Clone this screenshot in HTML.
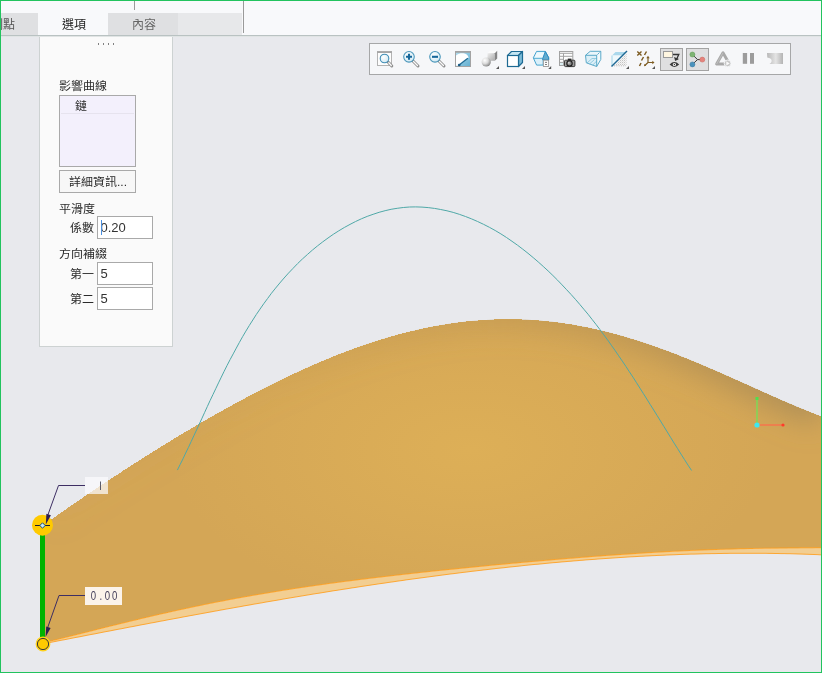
<!DOCTYPE html>
<html lang="zh-TW"><head><meta charset="utf-8">
<style>
html,body{margin:0;padding:0;}
body{width:822px;height:673px;position:relative;overflow:hidden;background:#e8e9ed;font-family:"Liberation Sans",sans-serif;}
.abs{position:absolute;}
#top{left:0;top:0;width:822px;height:35px;background:#f8f9fb;}
#topline{left:0;top:35px;width:822px;height:1px;background:#b9c2c2;}
.tab{position:absolute;top:13px;height:22px;font-size:12px;line-height:24px;text-align:center;}
.tt{position:absolute;left:0;top:0;width:100%;transform:translateZ(0);white-space:nowrap;}
#panel{left:39px;top:37px;width:132px;height:309px;background:#fafafa;border:1px solid #cdd2d2;border-top:none;}
.lbl{position:absolute;font-size:12px;color:#2a2a2a;font-weight:300;white-space:nowrap;line-height:14px;transform:translateZ(0) scaleY(0.92);transform-origin:0 85%;}
.inp{position:absolute;background:#fff;border:1px solid #a9a9a9;box-sizing:border-box;}
.num{font-size:13px;line-height:15px;transform:translateZ(0);color:#333;}
#border{left:0;top:0;width:822px;height:673px;box-sizing:border-box;border:1px solid #22c35e;pointer-events:none;}
#tb{left:369px;top:43px;width:422px;height:32px;box-sizing:border-box;border:1px solid #a6a7a8;background:#f6f7f9;}
</style></head>
<body>
<div id="top" class="abs"></div>
<div class="tab" style="left:1px;width:37px;background:#dfe0e2;overflow:hidden;"><span class="tt" style="left:-10px;width:auto;color:#555;">制點</span></div>
<div class="tab" style="left:38px;width:70px;background:#f8f9fb;"><span class="tt" style="left:1px;color:#1e1e1e;">選項</span></div>
<div class="tab" style="left:108px;width:70px;background:#dfe0e2;"><span class="tt" style="left:1px;color:#656565;">內容</span></div>
<div class="tab" style="left:178px;width:64px;background:#e7e8ea;"></div>
<div class="abs" style="left:134px;top:0;width:1px;height:10px;background:#9a9a9a;"></div>
<div class="abs" style="left:243px;top:0;width:1px;height:33px;background:#9a9a9a;"></div>
<div id="topline" class="abs"></div>
<div class="abs" style="left:0;top:36px;width:822px;height:1px;background:#e0e4e4;"></div>

<div id="panel" class="abs"></div>
<div class="abs" style="left:97.5px;top:43.3px;width:18px;height:1.4px;background-image:linear-gradient(90deg,#6a6a6a 1.3px,transparent 1.3px);background-size:5px 2px;opacity:0.85;"></div>
<div class="lbl" style="left:59px;top:79px;">影響曲線</div>
<div class="abs" style="left:59px;top:95px;width:77px;height:72px;box-sizing:border-box;border:1px solid #a9a9a9;background:#f3f0fc;"></div>
<div class="abs" style="left:61px;top:113px;width:73px;height:1px;background:#e6e3ee;"></div>
<div class="lbl" style="left:75px;top:99px;">鏈</div>
<div class="abs" style="left:59px;top:170px;width:77px;height:23px;box-sizing:border-box;border:1px solid #a9a9a9;background:#f7f7f7;"></div>
<div class="lbl" style="left:69px;top:175px;">詳細資訊...</div>
<div class="lbl" style="left:59px;top:202px;">平滑度</div>
<div class="lbl" style="left:70px;top:221px;">係數</div>
<div class="inp" style="left:97px;top:216px;width:56px;height:23px;"></div>
<div class="lbl num" style="left:100.5px;top:220px;">0.20</div>
<div class="abs" style="left:101px;top:220px;width:1px;height:15px;background:#4a8fe0;"></div>
<div class="lbl" style="left:59px;top:247px;">方向補綴</div>
<div class="lbl" style="left:70px;top:267px;">第一</div>
<div class="inp" style="left:97px;top:262px;width:56px;height:23px;"></div>
<div class="lbl num" style="left:100.5px;top:266px;">5</div>
<div class="lbl" style="left:70px;top:292px;">第二</div>
<div class="inp" style="left:97px;top:287px;width:56px;height:23px;"></div>
<div class="lbl num" style="left:100.5px;top:291px;">5</div>

<svg class="abs" style="left:369px;top:43px" width="422" height="32" viewBox="369 43 422 32">
 <defs>
  <radialGradient id="lens" cx="0.4" cy="0.35" r="0.7"><stop offset="0" stop-color="#ffffff"/><stop offset="1" stop-color="#cfe8f3"/></radialGradient>
  <radialGradient id="sphg" cx="0.35" cy="0.32" r="0.8"><stop offset="0" stop-color="#ffffff"/><stop offset="0.45" stop-color="#dcdcdc"/><stop offset="1" stop-color="#707070"/></radialGradient>
  <linearGradient id="cubeg" x1="0" y1="0" x2="1" y2="1"><stop offset="0" stop-color="#eeeeee"/><stop offset="1" stop-color="#a9a9a9"/></linearGradient>
  <linearGradient id="refg" x1="0" y1="0" x2="1" y2="1"><stop offset="0" stop-color="#b4def0"/><stop offset="1" stop-color="#62afd0"/></linearGradient>
  <pattern id="dots" width="2" height="2" patternUnits="userSpaceOnUse"><rect width="2" height="2" fill="#f4f4f4"/><rect x="0" y="0" width="1" height="1" fill="#c4c4c4"/><rect x="1" y="1" width="1" height="1" fill="#e2e2e2"/></pattern>
  <linearGradient id="g16" x1="0" y1="0" x2="1" y2="0"><stop offset="0" stop-color="#b8b8b8"/><stop offset="0.55" stop-color="#e4e4e4"/><stop offset="1" stop-color="#b4b4b4"/></linearGradient>
 </defs>
 <rect x="369.5" y="43.5" width="421" height="31" fill="#f6f7f9" stroke="#a6a7a8"/>
 <!-- 1 zoom window -->
 <rect x="377.5" y="51.5" width="14" height="14" fill="#fdfdfd" stroke="#b3b3b3"/>
 <line x1="377" y1="52.2" x2="392" y2="52.2" stroke="#a6a6a6" stroke-width="1.6"/>
 <line x1="388.3" y1="62.3" x2="391.8" y2="66" stroke="#8e8e8e" stroke-width="3" stroke-linecap="round"/>
 <line x1="388.8" y1="62.8" x2="391.3" y2="65.5" stroke="#fafafa" stroke-width="1.3" stroke-linecap="round"/>
 <circle cx="384.5" cy="58.5" r="4.3" fill="url(#lens)" stroke="#3f8db5" stroke-width="1.1"/>
 <!-- 2 zoom in -->
 <line x1="413" y1="61" x2="418" y2="66" stroke="#8e8e8e" stroke-width="3" stroke-linecap="round"/>
 <line x1="413.5" y1="61.5" x2="417.5" y2="65.5" stroke="#fafafa" stroke-width="1.3" stroke-linecap="round"/>
 <circle cx="409" cy="56.8" r="5.3" fill="url(#lens)" stroke="#4a96ba" stroke-width="1.05"/>
 <path d="M406,56.8 H412 M409,53.8 V59.8" stroke="#16679a" stroke-width="2.1"/>
 <!-- 3 zoom out -->
 <line x1="439" y1="61" x2="444" y2="66" stroke="#8e8e8e" stroke-width="3" stroke-linecap="round"/>
 <line x1="439.5" y1="61.5" x2="443.5" y2="65.5" stroke="#fafafa" stroke-width="1.3" stroke-linecap="round"/>
 <circle cx="435" cy="56.8" r="5.3" fill="url(#lens)" stroke="#4a96ba" stroke-width="1.05"/>
 <path d="M432,56.8 H438" stroke="#16679a" stroke-width="2.1"/>
 <!-- 4 refit -->
 <rect x="455.5" y="51.5" width="15" height="15" fill="url(#refg)" stroke="#a3a3a3"/>
 <line x1="455" y1="52" x2="471" y2="52" stroke="#a3a3a3" stroke-width="1.6"/>
 <path d="M456,55.5 C458,53.5 461,53 463.5,53.2 C466,53.5 467.8,55 468.6,57.4 L458.5,65.8 H456 Z" fill="#ffffff"/>
 <line x1="458.8" y1="65.3" x2="467.8" y2="58.2" stroke="#1e6b94" stroke-width="1.3"/>
 <circle cx="459.2" cy="65" r="1.3" fill="#1a5a84"/>
 <!-- 5 shading -->
 <path d="M487.5,53.2 L490,50.8 H497.2 L494.8,53.2 Z" fill="#fbfbfb"/>
 <path d="M487.5,53.2 H494.8 V60.8 H487.5 Z" fill="url(#cubeg)"/>
 <path d="M494.8,53.2 L497.2,50.8 V58.6 L494.8,60.8 Z" fill="#858585"/>
 <circle cx="486.2" cy="62" r="4.6" fill="url(#sphg)"/>
 <path d="M499,66 V69 H496 Z" fill="#555"/>
 <!-- 6 cube -->
 <path d="M507.5,55.5 L511.5,51.5 H522.5 L518.5,55.5 Z" fill="#c5e6f2" stroke="#1d6a93" stroke-width="1.2" stroke-linejoin="round"/>
 <path d="M518.5,55.5 L522.5,51.5 V62.5 L518.5,66.5 Z" fill="#7cbcd8" stroke="#1d6a93" stroke-width="1.2" stroke-linejoin="round"/>
 <rect x="507.5" y="55.5" width="11" height="11" fill="#fff" stroke="#1d6a93" stroke-width="1.2"/>
 <path d="M525,66 V69 H522 Z" fill="#555"/>
 <!-- 7 hex -->
 <path d="M533.3,57.8 L536.6,51.4 H545.3 L548.7,57.6 V60 H543.2 V65.1 H536.6 Z" fill="#daf0fa" stroke="#3d9fcc" stroke-width="0.95" stroke-linejoin="round"/>
 <path d="M536.8,52.5 H544.5 L542.3,58 H534.5 Z" fill="#eef9fd"/>
 <path d="M533.6,58.3 H542.6" stroke="#4aa6d0" stroke-width="0.95"/>
 <path d="M542.6,58.8 L545.3,51.6 L548.6,57.6 V59.8 H542.6 Z" fill="#62acd0" stroke="#2185bd" stroke-width="0.9" stroke-linejoin="round"/>
 <rect x="543.4" y="60.2" width="5.2" height="6.3" fill="#fcfcfc" stroke="#9a9a9a" stroke-width="0.9"/>
 <path d="M545,62.4 H547 M545,64.5 H547" stroke="#6f6f6f" stroke-width="0.9"/>
 <path d="M551.2,66 V69 H548.2 Z" fill="#555"/>
 <!-- 8 table camera -->
 <rect x="559.5" y="51.5" width="13.3" height="14" fill="#fdfdfd" stroke="#a2a2a2"/>
 <path d="M559.5,53.3 H572.8 M559.5,56.3 H572.8 M559.5,59.3 H564 M559.5,62.4 H564 M563.5,53.3 V65.5" stroke="#a2a2a2" stroke-width="1"/>
 <rect x="560.2" y="63.2" width="2.8" height="1.6" fill="#cfeaf0"/>
 <rect x="564.5" y="60.2" width="10.4" height="6.4" rx="1" fill="#9c9c9c" stroke="#2a2a2a" stroke-width="0.9"/>
 <rect x="567.8" y="58.6" width="3.6" height="1.8" fill="#2a2a2a"/>
 <circle cx="569.5" cy="63.4" r="2.7" fill="#8a8a8a" stroke="#1e1e1e" stroke-width="1.1"/>
 <circle cx="568.9" cy="62.8" r="0.9" fill="#d8d8d8"/>
 <!-- 9 tunnel box -->
 <path d="M585.5,55.3 L590.2,51.3 H600.8 L596.7,55.3 Z" fill="#eaf6fb"/>
 <path d="M596.7,55.3 L600.8,51.3 V59.4 L596.7,66.5 Z" fill="#f2fafd"/>
 <path d="M585.5,55.3 H596.7 V66.5 L586.3,62.8 Z" fill="#dceff7"/>
 <path d="M587,63 L592,58.5 H596.7 M589.5,64 L594.5,59.5 M592.5,65.3 L596.7,61" stroke="#8ac6de" stroke-width="0.9" fill="none"/>
 <path d="M585.5,55.3 L590.2,51.3 H600.8 V59.4 L596.7,66.5 L586.3,62.8 Z M585.5,55.3 H596.7 V66.5" fill="none" stroke="#5aa9c9" stroke-width="1" stroke-linejoin="round"/>
 <path d="M596.7,55.3 L600.8,51.3" stroke="#4a9cc0" stroke-width="1" stroke-dasharray="1.2,0.8"/>
 <!-- 10 section -->
 <path d="M612,55.5 L615.5,52 H626.5 L623,55.5 Z" fill="#aad8ec"/>
 <path d="M612,55.5 V66 L623,55.5 Z" fill="#eef8fc"/>
 <path d="M612,55.5 V66" stroke="#9fd3e8" stroke-width="1"/>
 <path d="M626.5,53 L614,65.5 H626.5 Z" fill="url(#dots)"/>
 <path d="M614,65.8 H626" stroke="#b8b8b8" stroke-width="1" stroke-dasharray="1,1.3"/>
 <line x1="611.5" y1="66.5" x2="627" y2="51" stroke="#1f6994" stroke-width="1.5"/>
 <path d="M629,66 V69 H626 Z" fill="#555"/>
 <!-- 11 datum -->
 <path d="M637.3,51.5 L641.5,55.5 M641.5,51.5 L637.3,55.5" stroke="#7d5c22" stroke-width="1.4"/>
 <path d="M644.5,55 L646.5,51.5 M641.5,60.5 L643.5,57 M639.5,66 L641,63" stroke="#7d5c22" stroke-width="1.5"/>
 <path d="M648,63 V57.5 M648,62.5 H653 M648,62.5 L644.8,65.5" stroke="#7d5c22" stroke-width="1.2"/>
 <path d="M646.3,58.3 L648,55.8 L649.7,58.3 Z M652.3,60.8 L654.5,62.5 L652.3,64.2 Z M644,64 L644.2,66.2 L646.2,65.8 Z" fill="#7d5c22"/>
 <path d="M655,66 V69 H652 Z" fill="#555"/>
 <!-- 12 active -->
 <rect x="660.5" y="48.5" width="22" height="22" fill="#dfdfe0" stroke="#a3a3a3"/>
 <rect x="663.5" y="51.5" width="9" height="6" fill="#fff6e0" stroke="#9a9a9a"/>
 <path d="M673,54.5 H678.8 L676.5,59.5" stroke="#353535" stroke-width="1.3" fill="none"/>
 <path d="M674,57 L675.2,61 L679,59 Z" fill="#353535"/>
 <path d="M669.6,64.5 Q674.4,59.6 679.2,64.5 Q674.4,69.4 669.6,64.5 Z" fill="#3a3a3a"/>
 <circle cx="674.4" cy="64.5" r="1.6" fill="#fff"/>
 <circle cx="674.4" cy="64.5" r="0.7" fill="#3a3a3a"/>
 <!-- 13 active -->
 <rect x="686.5" y="48.5" width="22" height="22" fill="#dfdfe0" stroke="#a3a3a3"/>
 <path d="M692.4,54.5 L697.5,59.6 H702.3 M697.5,59.6 L692.4,64.4" stroke="#3a3a3a" stroke-width="1" fill="none"/>
 <circle cx="692.4" cy="54.5" r="2.5" fill="#7fb474" stroke="#5a9a50" stroke-width="0.5"/>
 <circle cx="702.3" cy="59.6" r="2.5" fill="#e5837d" stroke="#c86a60" stroke-width="0.5"/>
 <circle cx="692.4" cy="64.4" r="2.5" fill="#4a92bc" stroke="#3a7aa0" stroke-width="0.5"/>
 <!-- 14 triangle -->
 <path d="M723,52.8 L716.6,64 H729.4 Z" fill="none" stroke="#a9a9a9" stroke-width="2.9" stroke-linejoin="round"/>
 <path d="M723,52.8 L716.6,64" fill="none" stroke="#c4c4c4" stroke-width="0.8"/>
 <circle cx="727.6" cy="63.4" r="3.4" fill="#c6c6c6" stroke="#f6f7f9" stroke-width="0.9"/>
 <path d="M726.3,61.3 L729.7,63.4 L726.3,65.5 Z" fill="#fafafa"/>
 <!-- 15 pause -->
 <rect x="742.8" y="53" width="4.3" height="10.8" fill="#9c9c9c"/>
 <rect x="750" y="53" width="4" height="10.8" fill="#9c9c9c"/>
 <!-- 16 -->
 <path d="M767,53 H783 V64 H769.5 C772.8,62.3 772.6,58.2 767.3,57.6 Z" fill="url(#g16)"/>
</svg>

<svg class="abs" style="left:0;top:0" width="822" height="673" viewBox="0 0 822 673">
  <defs>
    <radialGradient id="hl" cx="470" cy="450" r="300" gradientTransform="translate(470 450) scale(1 0.55) translate(-470 -450)" gradientUnits="userSpaceOnUse">
      <stop offset="0" stop-color="#ddaf57" stop-opacity="1"/>
      <stop offset="1" stop-color="#ddaf57" stop-opacity="0"/>
    </radialGradient>
    <linearGradient id="edg" x1="42" y1="0" x2="822" y2="0" gradientUnits="userSpaceOnUse">
      <stop offset="0" stop-color="#a8844e" stop-opacity="0.03"/>
      <stop offset="0.3" stop-color="#a8844e" stop-opacity="0.08"/>
      <stop offset="0.55" stop-color="#a8844e" stop-opacity="0.26"/>
      <stop offset="0.8" stop-color="#a48552" stop-opacity="0.5"/>
      <stop offset="1" stop-color="#a08658" stop-opacity="0.72"/>
    </linearGradient>
    <clipPath id="sclip"><path d="M42.5,525.9 45.5,523.8 48.5,521.6 51.5,519.5 54.5,517.3 57.5,515.2 60.5,513.1 63.5,511.0 66.5,508.9 69.5,506.8 72.5,504.7 75.5,502.6 78.5,500.6 81.5,498.5 84.5,496.5 87.5,494.4 90.5,492.4 93.5,490.4 96.5,488.4 99.5,486.3 102.5,484.3 105.5,482.4 108.5,480.4 111.5,478.4 114.5,476.4 117.5,474.5 120.5,472.5 123.5,470.5 126.5,468.6 129.5,466.7 132.5,464.7 135.5,462.8 138.5,460.9 141.5,459.0 144.5,457.1 147.5,455.2 150.5,453.3 153.5,451.5 156.5,449.6 159.5,447.7 162.5,445.9 165.5,444.0 168.5,442.2 171.5,440.4 174.5,438.5 177.5,436.7 180.5,434.9 183.5,433.1 186.5,431.3 189.5,429.6 192.5,427.8 195.5,426.0 198.5,424.3 201.5,422.5 204.5,420.8 207.5,419.1 210.5,417.3 213.5,415.6 216.5,413.9 219.5,412.2 222.5,410.6 225.5,408.9 228.5,407.2 231.5,405.6 234.5,403.9 237.5,402.3 240.5,400.7 243.5,399.1 246.5,397.5 249.5,395.9 252.5,394.3 255.5,392.7 258.5,391.2 261.5,389.6 264.5,388.1 267.5,386.6 270.5,385.1 273.5,383.6 276.5,382.1 279.5,380.6 282.5,379.2 285.5,377.7 288.5,376.3 291.5,374.9 294.5,373.5 297.5,372.1 300.5,370.7 303.5,369.3 306.5,368.0 309.5,366.6 312.5,365.3 315.5,364.0 318.5,362.7 321.5,361.5 324.5,360.2 327.5,359.0 330.5,357.7 333.5,356.5 336.5,355.3 339.5,354.1 342.5,353.0 345.5,351.8 348.5,350.7 351.5,349.6 354.5,348.5 357.5,347.4 360.5,346.3 363.5,345.3 366.5,344.3 369.5,343.3 372.5,342.3 375.5,341.3 378.5,340.4 381.5,339.4 384.5,338.5 387.5,337.6 390.5,336.7 393.5,335.9 396.5,335.1 399.5,334.2 402.5,333.4 405.5,332.7 408.5,331.9 411.5,331.2 414.5,330.5 417.5,329.8 420.5,329.1 423.5,328.4 426.5,327.8 429.5,327.2 432.5,326.6 435.5,326.0 438.5,325.5 441.5,325.0 444.5,324.5 447.5,324.0 450.5,323.5 453.5,323.1 456.5,322.7 459.5,322.3 462.5,322.0 465.5,321.6 468.5,321.3 471.5,321.0 474.5,320.7 477.5,320.5 480.5,320.2 483.5,320.0 486.5,319.9 489.5,319.7 492.5,319.6 495.5,319.4 498.5,319.4 501.5,319.3 504.5,319.3 507.5,319.2 510.5,319.2 513.5,319.3 516.5,319.3 519.5,319.4 522.5,319.5 525.5,319.6 528.5,319.8 531.5,320.0 534.5,320.2 537.5,320.4 540.5,320.6 543.5,320.9 546.5,321.2 549.5,321.5 552.5,321.8 555.5,322.2 558.5,322.6 561.5,323.0 564.5,323.4 567.5,323.9 570.5,324.3 573.5,324.8 576.5,325.4 579.5,325.9 582.5,326.5 585.5,327.1 588.5,327.7 591.5,328.3 594.5,329.0 597.5,329.7 600.5,330.4 603.5,331.1 606.5,331.8 609.5,332.6 612.5,333.4 615.5,334.2 618.5,335.0 621.5,335.8 624.5,336.7 627.5,337.6 630.5,338.5 633.5,339.4 636.5,340.3 639.5,341.3 642.5,342.3 645.5,343.3 648.5,344.3 651.5,345.3 654.5,346.4 657.5,347.4 660.5,348.5 663.5,349.6 666.5,350.7 669.5,351.8 672.5,353.0 675.5,354.1 678.5,355.3 681.5,356.5 684.5,357.7 687.5,358.9 690.5,360.1 693.5,361.4 696.5,362.6 699.5,363.9 702.5,365.1 705.5,366.4 708.5,367.7 711.5,369.0 714.5,370.3 717.5,371.6 720.5,372.9 723.5,374.2 726.5,375.5 729.5,376.9 732.5,378.2 735.5,379.5 738.5,380.9 741.5,382.2 744.5,383.6 747.5,384.9 750.5,386.3 753.5,387.6 756.5,389.0 759.5,390.3 762.5,391.7 765.5,393.0 768.5,394.4 771.5,395.7 774.5,397.0 777.5,398.3 780.5,399.7 783.5,401.0 786.5,402.3 789.5,403.6 792.5,404.8 795.5,406.1 798.5,407.4 801.5,408.6 804.5,409.8 807.5,411.1 810.5,412.3 813.5,413.4 816.5,414.6 819.5,415.8 822.5,416.9 823.0,417.1 L823.0,547.7 822.0,547.7 819.0,547.7 816.0,547.7 813.0,547.8 810.0,547.8 807.0,547.8 804.0,547.8 801.0,547.8 798.0,547.9 795.0,547.9 792.0,547.9 789.0,547.9 786.0,548.0 783.0,548.0 780.0,548.0 777.0,548.1 774.0,548.1 771.0,548.2 768.0,548.2 765.0,548.2 762.0,548.3 759.0,548.4 756.0,548.4 753.0,548.5 750.0,548.5 747.0,548.6 744.0,548.7 741.0,548.7 738.0,548.8 735.0,548.9 732.0,549.0 729.0,549.1 726.0,549.2 723.0,549.3 720.0,549.4 717.0,549.5 714.0,549.6 711.0,549.7 708.0,549.8 705.0,549.9 702.0,550.0 699.0,550.1 696.0,550.3 693.0,550.4 690.0,550.5 687.0,550.7 684.0,550.8 681.0,550.9 678.0,551.1 675.0,551.2 672.0,551.4 669.0,551.6 666.0,551.7 663.0,551.9 660.0,552.0 657.0,552.2 654.0,552.4 651.0,552.6 648.0,552.7 645.0,552.9 642.0,553.1 639.0,553.3 636.0,553.5 633.0,553.7 630.0,553.9 627.0,554.1 624.0,554.3 621.0,554.5 618.0,554.7 615.0,554.9 612.0,555.1 609.0,555.3 606.0,555.5 603.0,555.7 600.0,556.0 597.0,556.2 594.0,556.4 591.0,556.6 588.0,556.9 585.0,557.1 582.0,557.3 579.0,557.6 576.0,557.8 573.0,558.1 570.0,558.3 567.0,558.5 564.0,558.8 561.0,559.0 558.0,559.3 555.0,559.5 552.0,559.8 549.0,560.1 546.0,560.3 543.0,560.6 540.0,560.8 537.0,561.1 534.0,561.4 531.0,561.6 528.0,561.9 525.0,562.2 522.0,562.4 519.0,562.7 516.0,563.0 513.0,563.2 510.0,563.5 507.0,563.8 504.0,564.1 501.0,564.4 498.0,564.6 495.0,564.9 492.0,565.2 489.0,565.5 486.0,565.8 483.0,566.1 480.0,566.4 477.0,566.7 474.0,567.0 471.0,567.3 468.0,567.6 465.0,567.9 462.0,568.2 459.0,568.5 456.0,568.8 453.0,569.1 450.0,569.4 447.0,569.7 444.0,570.0 441.0,570.3 438.0,570.6 435.0,570.9 432.0,571.2 429.0,571.6 426.0,571.9 423.0,572.2 420.0,572.5 417.0,572.9 414.0,573.2 411.0,573.5 408.0,573.9 405.0,574.2 402.0,574.5 399.0,574.9 396.0,575.2 393.0,575.6 390.0,575.9 387.0,576.3 384.0,576.6 381.0,577.0 378.0,577.3 375.0,577.7 372.0,578.0 369.0,578.4 366.0,578.8 363.0,579.1 360.0,579.5 357.0,579.9 354.0,580.3 351.0,580.7 348.0,581.0 345.0,581.4 342.0,581.8 339.0,582.2 336.0,582.6 333.0,583.0 330.0,583.4 327.0,583.8 324.0,584.3 321.0,584.7 318.0,585.1 315.0,585.5 312.0,586.0 309.0,586.4 306.0,586.8 303.0,587.3 300.0,587.7 297.0,588.2 294.0,588.6 291.0,589.1 288.0,589.6 285.0,590.0 282.0,590.5 279.0,591.0 276.0,591.5 273.0,592.0 270.0,592.5 267.0,593.0 264.0,593.5 261.0,594.0 258.0,594.5 255.0,595.0 252.0,595.5 249.0,596.1 246.0,596.6 243.0,597.1 240.0,597.7 237.0,598.2 234.0,598.8 231.0,599.3 228.0,599.9 225.0,600.5 222.0,601.1 219.0,601.6 216.0,602.2 213.0,602.8 210.0,603.4 207.0,604.0 204.0,604.6 201.0,605.3 198.0,605.9 195.0,606.5 192.0,607.1 189.0,607.8 186.0,608.4 183.0,609.1 180.0,609.7 177.0,610.4 174.0,611.0 171.0,611.7 168.0,612.4 165.0,613.1 162.0,613.7 159.0,614.4 156.0,615.1 153.0,615.8 150.0,616.5 147.0,617.2 144.0,617.9 141.0,618.6 138.0,619.4 135.0,620.1 132.0,620.8 129.0,621.5 126.0,622.3 123.0,623.0 120.0,623.7 117.0,624.5 114.0,625.2 111.0,625.9 108.0,626.7 105.0,627.4 102.0,628.2 99.0,628.9 96.0,629.7 93.0,630.5 90.0,631.2 87.0,632.0 84.0,632.7 81.0,633.5 78.0,634.2 75.0,635.0 72.0,635.7 69.0,636.5 66.0,637.2 63.0,638.0 60.0,638.7 57.0,639.5 54.0,640.2 51.0,640.9 48.0,641.6 45.0,642.4 Z" shape-rendering="crispEdges"/></clipPath>
    <filter id="blur" x="-20%" y="-50%" width="140%" height="200%"><feGaussianBlur stdDeviation="14"/></filter>
  </defs>
  <path d="M42.5,525.9 45.5,523.8 48.5,521.6 51.5,519.5 54.5,517.3 57.5,515.2 60.5,513.1 63.5,511.0 66.5,508.9 69.5,506.8 72.5,504.7 75.5,502.6 78.5,500.6 81.5,498.5 84.5,496.5 87.5,494.4 90.5,492.4 93.5,490.4 96.5,488.4 99.5,486.3 102.5,484.3 105.5,482.4 108.5,480.4 111.5,478.4 114.5,476.4 117.5,474.5 120.5,472.5 123.5,470.5 126.5,468.6 129.5,466.7 132.5,464.7 135.5,462.8 138.5,460.9 141.5,459.0 144.5,457.1 147.5,455.2 150.5,453.3 153.5,451.5 156.5,449.6 159.5,447.7 162.5,445.9 165.5,444.0 168.5,442.2 171.5,440.4 174.5,438.5 177.5,436.7 180.5,434.9 183.5,433.1 186.5,431.3 189.5,429.6 192.5,427.8 195.5,426.0 198.5,424.3 201.5,422.5 204.5,420.8 207.5,419.1 210.5,417.3 213.5,415.6 216.5,413.9 219.5,412.2 222.5,410.6 225.5,408.9 228.5,407.2 231.5,405.6 234.5,403.9 237.5,402.3 240.5,400.7 243.5,399.1 246.5,397.5 249.5,395.9 252.5,394.3 255.5,392.7 258.5,391.2 261.5,389.6 264.5,388.1 267.5,386.6 270.5,385.1 273.5,383.6 276.5,382.1 279.5,380.6 282.5,379.2 285.5,377.7 288.5,376.3 291.5,374.9 294.5,373.5 297.5,372.1 300.5,370.7 303.5,369.3 306.5,368.0 309.5,366.6 312.5,365.3 315.5,364.0 318.5,362.7 321.5,361.5 324.5,360.2 327.5,359.0 330.5,357.7 333.5,356.5 336.5,355.3 339.5,354.1 342.5,353.0 345.5,351.8 348.5,350.7 351.5,349.6 354.5,348.5 357.5,347.4 360.5,346.3 363.5,345.3 366.5,344.3 369.5,343.3 372.5,342.3 375.5,341.3 378.5,340.4 381.5,339.4 384.5,338.5 387.5,337.6 390.5,336.7 393.5,335.9 396.5,335.1 399.5,334.2 402.5,333.4 405.5,332.7 408.5,331.9 411.5,331.2 414.5,330.5 417.5,329.8 420.5,329.1 423.5,328.4 426.5,327.8 429.5,327.2 432.5,326.6 435.5,326.0 438.5,325.5 441.5,325.0 444.5,324.5 447.5,324.0 450.5,323.5 453.5,323.1 456.5,322.7 459.5,322.3 462.5,322.0 465.5,321.6 468.5,321.3 471.5,321.0 474.5,320.7 477.5,320.5 480.5,320.2 483.5,320.0 486.5,319.9 489.5,319.7 492.5,319.6 495.5,319.4 498.5,319.4 501.5,319.3 504.5,319.3 507.5,319.2 510.5,319.2 513.5,319.3 516.5,319.3 519.5,319.4 522.5,319.5 525.5,319.6 528.5,319.8 531.5,320.0 534.5,320.2 537.5,320.4 540.5,320.6 543.5,320.9 546.5,321.2 549.5,321.5 552.5,321.8 555.5,322.2 558.5,322.6 561.5,323.0 564.5,323.4 567.5,323.9 570.5,324.3 573.5,324.8 576.5,325.4 579.5,325.9 582.5,326.5 585.5,327.1 588.5,327.7 591.5,328.3 594.5,329.0 597.5,329.7 600.5,330.4 603.5,331.1 606.5,331.8 609.5,332.6 612.5,333.4 615.5,334.2 618.5,335.0 621.5,335.8 624.5,336.7 627.5,337.6 630.5,338.5 633.5,339.4 636.5,340.3 639.5,341.3 642.5,342.3 645.5,343.3 648.5,344.3 651.5,345.3 654.5,346.4 657.5,347.4 660.5,348.5 663.5,349.6 666.5,350.7 669.5,351.8 672.5,353.0 675.5,354.1 678.5,355.3 681.5,356.5 684.5,357.7 687.5,358.9 690.5,360.1 693.5,361.4 696.5,362.6 699.5,363.9 702.5,365.1 705.5,366.4 708.5,367.7 711.5,369.0 714.5,370.3 717.5,371.6 720.5,372.9 723.5,374.2 726.5,375.5 729.5,376.9 732.5,378.2 735.5,379.5 738.5,380.9 741.5,382.2 744.5,383.6 747.5,384.9 750.5,386.3 753.5,387.6 756.5,389.0 759.5,390.3 762.5,391.7 765.5,393.0 768.5,394.4 771.5,395.7 774.5,397.0 777.5,398.3 780.5,399.7 783.5,401.0 786.5,402.3 789.5,403.6 792.5,404.8 795.5,406.1 798.5,407.4 801.5,408.6 804.5,409.8 807.5,411.1 810.5,412.3 813.5,413.4 816.5,414.6 819.5,415.8 822.5,416.9 823.0,417.1 L823.0,547.7 822.0,547.7 819.0,547.7 816.0,547.7 813.0,547.8 810.0,547.8 807.0,547.8 804.0,547.8 801.0,547.8 798.0,547.9 795.0,547.9 792.0,547.9 789.0,547.9 786.0,548.0 783.0,548.0 780.0,548.0 777.0,548.1 774.0,548.1 771.0,548.2 768.0,548.2 765.0,548.2 762.0,548.3 759.0,548.4 756.0,548.4 753.0,548.5 750.0,548.5 747.0,548.6 744.0,548.7 741.0,548.7 738.0,548.8 735.0,548.9 732.0,549.0 729.0,549.1 726.0,549.2 723.0,549.3 720.0,549.4 717.0,549.5 714.0,549.6 711.0,549.7 708.0,549.8 705.0,549.9 702.0,550.0 699.0,550.1 696.0,550.3 693.0,550.4 690.0,550.5 687.0,550.7 684.0,550.8 681.0,550.9 678.0,551.1 675.0,551.2 672.0,551.4 669.0,551.6 666.0,551.7 663.0,551.9 660.0,552.0 657.0,552.2 654.0,552.4 651.0,552.6 648.0,552.7 645.0,552.9 642.0,553.1 639.0,553.3 636.0,553.5 633.0,553.7 630.0,553.9 627.0,554.1 624.0,554.3 621.0,554.5 618.0,554.7 615.0,554.9 612.0,555.1 609.0,555.3 606.0,555.5 603.0,555.7 600.0,556.0 597.0,556.2 594.0,556.4 591.0,556.6 588.0,556.9 585.0,557.1 582.0,557.3 579.0,557.6 576.0,557.8 573.0,558.1 570.0,558.3 567.0,558.5 564.0,558.8 561.0,559.0 558.0,559.3 555.0,559.5 552.0,559.8 549.0,560.1 546.0,560.3 543.0,560.6 540.0,560.8 537.0,561.1 534.0,561.4 531.0,561.6 528.0,561.9 525.0,562.2 522.0,562.4 519.0,562.7 516.0,563.0 513.0,563.2 510.0,563.5 507.0,563.8 504.0,564.1 501.0,564.4 498.0,564.6 495.0,564.9 492.0,565.2 489.0,565.5 486.0,565.8 483.0,566.1 480.0,566.4 477.0,566.7 474.0,567.0 471.0,567.3 468.0,567.6 465.0,567.9 462.0,568.2 459.0,568.5 456.0,568.8 453.0,569.1 450.0,569.4 447.0,569.7 444.0,570.0 441.0,570.3 438.0,570.6 435.0,570.9 432.0,571.2 429.0,571.6 426.0,571.9 423.0,572.2 420.0,572.5 417.0,572.9 414.0,573.2 411.0,573.5 408.0,573.9 405.0,574.2 402.0,574.5 399.0,574.9 396.0,575.2 393.0,575.6 390.0,575.9 387.0,576.3 384.0,576.6 381.0,577.0 378.0,577.3 375.0,577.7 372.0,578.0 369.0,578.4 366.0,578.8 363.0,579.1 360.0,579.5 357.0,579.9 354.0,580.3 351.0,580.7 348.0,581.0 345.0,581.4 342.0,581.8 339.0,582.2 336.0,582.6 333.0,583.0 330.0,583.4 327.0,583.8 324.0,584.3 321.0,584.7 318.0,585.1 315.0,585.5 312.0,586.0 309.0,586.4 306.0,586.8 303.0,587.3 300.0,587.7 297.0,588.2 294.0,588.6 291.0,589.1 288.0,589.6 285.0,590.0 282.0,590.5 279.0,591.0 276.0,591.5 273.0,592.0 270.0,592.5 267.0,593.0 264.0,593.5 261.0,594.0 258.0,594.5 255.0,595.0 252.0,595.5 249.0,596.1 246.0,596.6 243.0,597.1 240.0,597.7 237.0,598.2 234.0,598.8 231.0,599.3 228.0,599.9 225.0,600.5 222.0,601.1 219.0,601.6 216.0,602.2 213.0,602.8 210.0,603.4 207.0,604.0 204.0,604.6 201.0,605.3 198.0,605.9 195.0,606.5 192.0,607.1 189.0,607.8 186.0,608.4 183.0,609.1 180.0,609.7 177.0,610.4 174.0,611.0 171.0,611.7 168.0,612.4 165.0,613.1 162.0,613.7 159.0,614.4 156.0,615.1 153.0,615.8 150.0,616.5 147.0,617.2 144.0,617.9 141.0,618.6 138.0,619.4 135.0,620.1 132.0,620.8 129.0,621.5 126.0,622.3 123.0,623.0 120.0,623.7 117.0,624.5 114.0,625.2 111.0,625.9 108.0,626.7 105.0,627.4 102.0,628.2 99.0,628.9 96.0,629.7 93.0,630.5 90.0,631.2 87.0,632.0 84.0,632.7 81.0,633.5 78.0,634.2 75.0,635.0 72.0,635.7 69.0,636.5 66.0,637.2 63.0,638.0 60.0,638.7 57.0,639.5 54.0,640.2 51.0,640.9 48.0,641.6 45.0,642.4 Z" fill="#d4a656" shape-rendering="crispEdges"/>
  <path d="M42.5,525.9 45.5,523.8 48.5,521.6 51.5,519.5 54.5,517.3 57.5,515.2 60.5,513.1 63.5,511.0 66.5,508.9 69.5,506.8 72.5,504.7 75.5,502.6 78.5,500.6 81.5,498.5 84.5,496.5 87.5,494.4 90.5,492.4 93.5,490.4 96.5,488.4 99.5,486.3 102.5,484.3 105.5,482.4 108.5,480.4 111.5,478.4 114.5,476.4 117.5,474.5 120.5,472.5 123.5,470.5 126.5,468.6 129.5,466.7 132.5,464.7 135.5,462.8 138.5,460.9 141.5,459.0 144.5,457.1 147.5,455.2 150.5,453.3 153.5,451.5 156.5,449.6 159.5,447.7 162.5,445.9 165.5,444.0 168.5,442.2 171.5,440.4 174.5,438.5 177.5,436.7 180.5,434.9 183.5,433.1 186.5,431.3 189.5,429.6 192.5,427.8 195.5,426.0 198.5,424.3 201.5,422.5 204.5,420.8 207.5,419.1 210.5,417.3 213.5,415.6 216.5,413.9 219.5,412.2 222.5,410.6 225.5,408.9 228.5,407.2 231.5,405.6 234.5,403.9 237.5,402.3 240.5,400.7 243.5,399.1 246.5,397.5 249.5,395.9 252.5,394.3 255.5,392.7 258.5,391.2 261.5,389.6 264.5,388.1 267.5,386.6 270.5,385.1 273.5,383.6 276.5,382.1 279.5,380.6 282.5,379.2 285.5,377.7 288.5,376.3 291.5,374.9 294.5,373.5 297.5,372.1 300.5,370.7 303.5,369.3 306.5,368.0 309.5,366.6 312.5,365.3 315.5,364.0 318.5,362.7 321.5,361.5 324.5,360.2 327.5,359.0 330.5,357.7 333.5,356.5 336.5,355.3 339.5,354.1 342.5,353.0 345.5,351.8 348.5,350.7 351.5,349.6 354.5,348.5 357.5,347.4 360.5,346.3 363.5,345.3 366.5,344.3 369.5,343.3 372.5,342.3 375.5,341.3 378.5,340.4 381.5,339.4 384.5,338.5 387.5,337.6 390.5,336.7 393.5,335.9 396.5,335.1 399.5,334.2 402.5,333.4 405.5,332.7 408.5,331.9 411.5,331.2 414.5,330.5 417.5,329.8 420.5,329.1 423.5,328.4 426.5,327.8 429.5,327.2 432.5,326.6 435.5,326.0 438.5,325.5 441.5,325.0 444.5,324.5 447.5,324.0 450.5,323.5 453.5,323.1 456.5,322.7 459.5,322.3 462.5,322.0 465.5,321.6 468.5,321.3 471.5,321.0 474.5,320.7 477.5,320.5 480.5,320.2 483.5,320.0 486.5,319.9 489.5,319.7 492.5,319.6 495.5,319.4 498.5,319.4 501.5,319.3 504.5,319.3 507.5,319.2 510.5,319.2 513.5,319.3 516.5,319.3 519.5,319.4 522.5,319.5 525.5,319.6 528.5,319.8 531.5,320.0 534.5,320.2 537.5,320.4 540.5,320.6 543.5,320.9 546.5,321.2 549.5,321.5 552.5,321.8 555.5,322.2 558.5,322.6 561.5,323.0 564.5,323.4 567.5,323.9 570.5,324.3 573.5,324.8 576.5,325.4 579.5,325.9 582.5,326.5 585.5,327.1 588.5,327.7 591.5,328.3 594.5,329.0 597.5,329.7 600.5,330.4 603.5,331.1 606.5,331.8 609.5,332.6 612.5,333.4 615.5,334.2 618.5,335.0 621.5,335.8 624.5,336.7 627.5,337.6 630.5,338.5 633.5,339.4 636.5,340.3 639.5,341.3 642.5,342.3 645.5,343.3 648.5,344.3 651.5,345.3 654.5,346.4 657.5,347.4 660.5,348.5 663.5,349.6 666.5,350.7 669.5,351.8 672.5,353.0 675.5,354.1 678.5,355.3 681.5,356.5 684.5,357.7 687.5,358.9 690.5,360.1 693.5,361.4 696.5,362.6 699.5,363.9 702.5,365.1 705.5,366.4 708.5,367.7 711.5,369.0 714.5,370.3 717.5,371.6 720.5,372.9 723.5,374.2 726.5,375.5 729.5,376.9 732.5,378.2 735.5,379.5 738.5,380.9 741.5,382.2 744.5,383.6 747.5,384.9 750.5,386.3 753.5,387.6 756.5,389.0 759.5,390.3 762.5,391.7 765.5,393.0 768.5,394.4 771.5,395.7 774.5,397.0 777.5,398.3 780.5,399.7 783.5,401.0 786.5,402.3 789.5,403.6 792.5,404.8 795.5,406.1 798.5,407.4 801.5,408.6 804.5,409.8 807.5,411.1 810.5,412.3 813.5,413.4 816.5,414.6 819.5,415.8 822.5,416.9 823.0,417.1 L823.0,547.7 822.0,547.7 819.0,547.7 816.0,547.7 813.0,547.8 810.0,547.8 807.0,547.8 804.0,547.8 801.0,547.8 798.0,547.9 795.0,547.9 792.0,547.9 789.0,547.9 786.0,548.0 783.0,548.0 780.0,548.0 777.0,548.1 774.0,548.1 771.0,548.2 768.0,548.2 765.0,548.2 762.0,548.3 759.0,548.4 756.0,548.4 753.0,548.5 750.0,548.5 747.0,548.6 744.0,548.7 741.0,548.7 738.0,548.8 735.0,548.9 732.0,549.0 729.0,549.1 726.0,549.2 723.0,549.3 720.0,549.4 717.0,549.5 714.0,549.6 711.0,549.7 708.0,549.8 705.0,549.9 702.0,550.0 699.0,550.1 696.0,550.3 693.0,550.4 690.0,550.5 687.0,550.7 684.0,550.8 681.0,550.9 678.0,551.1 675.0,551.2 672.0,551.4 669.0,551.6 666.0,551.7 663.0,551.9 660.0,552.0 657.0,552.2 654.0,552.4 651.0,552.6 648.0,552.7 645.0,552.9 642.0,553.1 639.0,553.3 636.0,553.5 633.0,553.7 630.0,553.9 627.0,554.1 624.0,554.3 621.0,554.5 618.0,554.7 615.0,554.9 612.0,555.1 609.0,555.3 606.0,555.5 603.0,555.7 600.0,556.0 597.0,556.2 594.0,556.4 591.0,556.6 588.0,556.9 585.0,557.1 582.0,557.3 579.0,557.6 576.0,557.8 573.0,558.1 570.0,558.3 567.0,558.5 564.0,558.8 561.0,559.0 558.0,559.3 555.0,559.5 552.0,559.8 549.0,560.1 546.0,560.3 543.0,560.6 540.0,560.8 537.0,561.1 534.0,561.4 531.0,561.6 528.0,561.9 525.0,562.2 522.0,562.4 519.0,562.7 516.0,563.0 513.0,563.2 510.0,563.5 507.0,563.8 504.0,564.1 501.0,564.4 498.0,564.6 495.0,564.9 492.0,565.2 489.0,565.5 486.0,565.8 483.0,566.1 480.0,566.4 477.0,566.7 474.0,567.0 471.0,567.3 468.0,567.6 465.0,567.9 462.0,568.2 459.0,568.5 456.0,568.8 453.0,569.1 450.0,569.4 447.0,569.7 444.0,570.0 441.0,570.3 438.0,570.6 435.0,570.9 432.0,571.2 429.0,571.6 426.0,571.9 423.0,572.2 420.0,572.5 417.0,572.9 414.0,573.2 411.0,573.5 408.0,573.9 405.0,574.2 402.0,574.5 399.0,574.9 396.0,575.2 393.0,575.6 390.0,575.9 387.0,576.3 384.0,576.6 381.0,577.0 378.0,577.3 375.0,577.7 372.0,578.0 369.0,578.4 366.0,578.8 363.0,579.1 360.0,579.5 357.0,579.9 354.0,580.3 351.0,580.7 348.0,581.0 345.0,581.4 342.0,581.8 339.0,582.2 336.0,582.6 333.0,583.0 330.0,583.4 327.0,583.8 324.0,584.3 321.0,584.7 318.0,585.1 315.0,585.5 312.0,586.0 309.0,586.4 306.0,586.8 303.0,587.3 300.0,587.7 297.0,588.2 294.0,588.6 291.0,589.1 288.0,589.6 285.0,590.0 282.0,590.5 279.0,591.0 276.0,591.5 273.0,592.0 270.0,592.5 267.0,593.0 264.0,593.5 261.0,594.0 258.0,594.5 255.0,595.0 252.0,595.5 249.0,596.1 246.0,596.6 243.0,597.1 240.0,597.7 237.0,598.2 234.0,598.8 231.0,599.3 228.0,599.9 225.0,600.5 222.0,601.1 219.0,601.6 216.0,602.2 213.0,602.8 210.0,603.4 207.0,604.0 204.0,604.6 201.0,605.3 198.0,605.9 195.0,606.5 192.0,607.1 189.0,607.8 186.0,608.4 183.0,609.1 180.0,609.7 177.0,610.4 174.0,611.0 171.0,611.7 168.0,612.4 165.0,613.1 162.0,613.7 159.0,614.4 156.0,615.1 153.0,615.8 150.0,616.5 147.0,617.2 144.0,617.9 141.0,618.6 138.0,619.4 135.0,620.1 132.0,620.8 129.0,621.5 126.0,622.3 123.0,623.0 120.0,623.7 117.0,624.5 114.0,625.2 111.0,625.9 108.0,626.7 105.0,627.4 102.0,628.2 99.0,628.9 96.0,629.7 93.0,630.5 90.0,631.2 87.0,632.0 84.0,632.7 81.0,633.5 78.0,634.2 75.0,635.0 72.0,635.7 69.0,636.5 66.0,637.2 63.0,638.0 60.0,638.7 57.0,639.5 54.0,640.2 51.0,640.9 48.0,641.6 45.0,642.4 Z" fill="url(#hl)"/>
  <g clip-path="url(#sclip)">
    <path d="M42.5,525.9 45.5,523.8 48.5,521.6 51.5,519.5 54.5,517.3 57.5,515.2 60.5,513.1 63.5,511.0 66.5,508.9 69.5,506.8 72.5,504.7 75.5,502.6 78.5,500.6 81.5,498.5 84.5,496.5 87.5,494.4 90.5,492.4 93.5,490.4 96.5,488.4 99.5,486.3 102.5,484.3 105.5,482.4 108.5,480.4 111.5,478.4 114.5,476.4 117.5,474.5 120.5,472.5 123.5,470.5 126.5,468.6 129.5,466.7 132.5,464.7 135.5,462.8 138.5,460.9 141.5,459.0 144.5,457.1 147.5,455.2 150.5,453.3 153.5,451.5 156.5,449.6 159.5,447.7 162.5,445.9 165.5,444.0 168.5,442.2 171.5,440.4 174.5,438.5 177.5,436.7 180.5,434.9 183.5,433.1 186.5,431.3 189.5,429.6 192.5,427.8 195.5,426.0 198.5,424.3 201.5,422.5 204.5,420.8 207.5,419.1 210.5,417.3 213.5,415.6 216.5,413.9 219.5,412.2 222.5,410.6 225.5,408.9 228.5,407.2 231.5,405.6 234.5,403.9 237.5,402.3 240.5,400.7 243.5,399.1 246.5,397.5 249.5,395.9 252.5,394.3 255.5,392.7 258.5,391.2 261.5,389.6 264.5,388.1 267.5,386.6 270.5,385.1 273.5,383.6 276.5,382.1 279.5,380.6 282.5,379.2 285.5,377.7 288.5,376.3 291.5,374.9 294.5,373.5 297.5,372.1 300.5,370.7 303.5,369.3 306.5,368.0 309.5,366.6 312.5,365.3 315.5,364.0 318.5,362.7 321.5,361.5 324.5,360.2 327.5,359.0 330.5,357.7 333.5,356.5 336.5,355.3 339.5,354.1 342.5,353.0 345.5,351.8 348.5,350.7 351.5,349.6 354.5,348.5 357.5,347.4 360.5,346.3 363.5,345.3 366.5,344.3 369.5,343.3 372.5,342.3 375.5,341.3 378.5,340.4 381.5,339.4 384.5,338.5 387.5,337.6 390.5,336.7 393.5,335.9 396.5,335.1 399.5,334.2 402.5,333.4 405.5,332.7 408.5,331.9 411.5,331.2 414.5,330.5 417.5,329.8 420.5,329.1 423.5,328.4 426.5,327.8 429.5,327.2 432.5,326.6 435.5,326.0 438.5,325.5 441.5,325.0 444.5,324.5 447.5,324.0 450.5,323.5 453.5,323.1 456.5,322.7 459.5,322.3 462.5,322.0 465.5,321.6 468.5,321.3 471.5,321.0 474.5,320.7 477.5,320.5 480.5,320.2 483.5,320.0 486.5,319.9 489.5,319.7 492.5,319.6 495.5,319.4 498.5,319.4 501.5,319.3 504.5,319.3 507.5,319.2 510.5,319.2 513.5,319.3 516.5,319.3 519.5,319.4 522.5,319.5 525.5,319.6 528.5,319.8 531.5,320.0 534.5,320.2 537.5,320.4 540.5,320.6 543.5,320.9 546.5,321.2 549.5,321.5 552.5,321.8 555.5,322.2 558.5,322.6 561.5,323.0 564.5,323.4 567.5,323.9 570.5,324.3 573.5,324.8 576.5,325.4 579.5,325.9 582.5,326.5 585.5,327.1 588.5,327.7 591.5,328.3 594.5,329.0 597.5,329.7 600.5,330.4 603.5,331.1 606.5,331.8 609.5,332.6 612.5,333.4 615.5,334.2 618.5,335.0 621.5,335.8 624.5,336.7 627.5,337.6 630.5,338.5 633.5,339.4 636.5,340.3 639.5,341.3 642.5,342.3 645.5,343.3 648.5,344.3 651.5,345.3 654.5,346.4 657.5,347.4 660.5,348.5 663.5,349.6 666.5,350.7 669.5,351.8 672.5,353.0 675.5,354.1 678.5,355.3 681.5,356.5 684.5,357.7 687.5,358.9 690.5,360.1 693.5,361.4 696.5,362.6 699.5,363.9 702.5,365.1 705.5,366.4 708.5,367.7 711.5,369.0 714.5,370.3 717.5,371.6 720.5,372.9 723.5,374.2 726.5,375.5 729.5,376.9 732.5,378.2 735.5,379.5 738.5,380.9 741.5,382.2 744.5,383.6 747.5,384.9 750.5,386.3 753.5,387.6 756.5,389.0 759.5,390.3 762.5,391.7 765.5,393.0 768.5,394.4 771.5,395.7 774.5,397.0 777.5,398.3 780.5,399.7 783.5,401.0 786.5,402.3 789.5,403.6 792.5,404.8 795.5,406.1 798.5,407.4 801.5,408.6 804.5,409.8 807.5,411.1 810.5,412.3 813.5,413.4 816.5,414.6 819.5,415.8 822.5,416.9 823.0,417.1" transform="translate(0,-12)" fill="none" stroke="url(#edg)" stroke-width="44" filter="url(#blur)"/>
  </g>
  <path d="M45.0,642.4 48.0,641.6 51.0,640.9 54.0,640.2 57.0,639.5 60.0,638.7 63.0,638.0 66.0,637.2 69.0,636.5 72.0,635.7 75.0,635.0 78.0,634.2 81.0,633.5 84.0,632.7 87.0,632.0 90.0,631.2 93.0,630.5 96.0,629.7 99.0,628.9 102.0,628.2 105.0,627.4 108.0,626.7 111.0,625.9 114.0,625.2 117.0,624.5 120.0,623.7 123.0,623.0 126.0,622.3 129.0,621.5 132.0,620.8 135.0,620.1 138.0,619.4 141.0,618.6 144.0,617.9 147.0,617.2 150.0,616.5 153.0,615.8 156.0,615.1 159.0,614.4 162.0,613.7 165.0,613.1 168.0,612.4 171.0,611.7 174.0,611.0 177.0,610.4 180.0,609.7 183.0,609.1 186.0,608.4 189.0,607.8 192.0,607.1 195.0,606.5 198.0,605.9 201.0,605.3 204.0,604.6 207.0,604.0 210.0,603.4 213.0,602.8 216.0,602.2 219.0,601.6 222.0,601.1 225.0,600.5 228.0,599.9 231.0,599.3 234.0,598.8 237.0,598.2 240.0,597.7 243.0,597.1 246.0,596.6 249.0,596.1 252.0,595.5 255.0,595.0 258.0,594.5 261.0,594.0 264.0,593.5 267.0,593.0 270.0,592.5 273.0,592.0 276.0,591.5 279.0,591.0 282.0,590.5 285.0,590.0 288.0,589.6 291.0,589.1 294.0,588.6 297.0,588.2 300.0,587.7 303.0,587.3 306.0,586.8 309.0,586.4 312.0,586.0 315.0,585.5 318.0,585.1 321.0,584.7 324.0,584.3 327.0,583.8 330.0,583.4 333.0,583.0 336.0,582.6 339.0,582.2 342.0,581.8 345.0,581.4 348.0,581.0 351.0,580.7 354.0,580.3 357.0,579.9 360.0,579.5 363.0,579.1 366.0,578.8 369.0,578.4 372.0,578.0 375.0,577.7 378.0,577.3 381.0,577.0 384.0,576.6 387.0,576.3 390.0,575.9 393.0,575.6 396.0,575.2 399.0,574.9 402.0,574.5 405.0,574.2 408.0,573.9 411.0,573.5 414.0,573.2 417.0,572.9 420.0,572.5 423.0,572.2 426.0,571.9 429.0,571.6 432.0,571.2 435.0,570.9 438.0,570.6 441.0,570.3 444.0,570.0 447.0,569.7 450.0,569.4 453.0,569.1 456.0,568.8 459.0,568.5 462.0,568.2 465.0,567.9 468.0,567.6 471.0,567.3 474.0,567.0 477.0,566.7 480.0,566.4 483.0,566.1 486.0,565.8 489.0,565.5 492.0,565.2 495.0,564.9 498.0,564.6 501.0,564.4 504.0,564.1 507.0,563.8 510.0,563.5 513.0,563.2 516.0,563.0 519.0,562.7 522.0,562.4 525.0,562.2 528.0,561.9 531.0,561.6 534.0,561.4 537.0,561.1 540.0,560.8 543.0,560.6 546.0,560.3 549.0,560.1 552.0,559.8 555.0,559.5 558.0,559.3 561.0,559.0 564.0,558.8 567.0,558.5 570.0,558.3 573.0,558.1 576.0,557.8 579.0,557.6 582.0,557.3 585.0,557.1 588.0,556.9 591.0,556.6 594.0,556.4 597.0,556.2 600.0,556.0 603.0,555.7 606.0,555.5 609.0,555.3 612.0,555.1 615.0,554.9 618.0,554.7 621.0,554.5 624.0,554.3 627.0,554.1 630.0,553.9 633.0,553.7 636.0,553.5 639.0,553.3 642.0,553.1 645.0,552.9 648.0,552.7 651.0,552.6 654.0,552.4 657.0,552.2 660.0,552.0 663.0,551.9 666.0,551.7 669.0,551.6 672.0,551.4 675.0,551.2 678.0,551.1 681.0,550.9 684.0,550.8 687.0,550.7 690.0,550.5 693.0,550.4 696.0,550.3 699.0,550.1 702.0,550.0 705.0,549.9 708.0,549.8 711.0,549.7 714.0,549.6 717.0,549.5 720.0,549.4 723.0,549.3 726.0,549.2 729.0,549.1 732.0,549.0 735.0,548.9 738.0,548.8 741.0,548.7 744.0,548.7 747.0,548.6 750.0,548.5 753.0,548.5 756.0,548.4 759.0,548.4 762.0,548.3 765.0,548.2 768.0,548.2 771.0,548.2 774.0,548.1 777.0,548.1 780.0,548.0 783.0,548.0 786.0,548.0 789.0,547.9 792.0,547.9 795.0,547.9 798.0,547.9 801.0,547.8 804.0,547.8 807.0,547.8 810.0,547.8 813.0,547.8 816.0,547.7 819.0,547.7 822.0,547.7 823.0,547.7 L823.0,554.9 820.0,554.8 817.0,554.6 814.0,554.5 811.0,554.4 808.0,554.3 805.0,554.2 802.0,554.1 799.0,554.0 796.0,553.9 793.0,553.8 790.0,553.7 787.0,553.7 784.0,553.6 781.0,553.6 778.0,553.5 775.0,553.5 772.0,553.4 769.0,553.4 766.0,553.3 763.0,553.3 760.0,553.3 757.0,553.3 754.0,553.3 751.0,553.3 748.0,553.3 745.0,553.3 742.0,553.3 739.0,553.3 736.0,553.3 733.0,553.3 730.0,553.3 727.0,553.4 724.0,553.4 721.0,553.5 718.0,553.5 715.0,553.6 712.0,553.6 709.0,553.7 706.0,553.7 703.0,553.8 700.0,553.9 697.0,554.0 694.0,554.1 691.0,554.1 688.0,554.2 685.0,554.3 682.0,554.4 679.0,554.5 676.0,554.7 673.0,554.8 670.0,554.9 667.0,555.0 664.0,555.2 661.0,555.3 658.0,555.4 655.0,555.6 652.0,555.7 649.0,555.9 646.0,556.0 643.0,556.2 640.0,556.3 637.0,556.5 634.0,556.7 631.0,556.8 628.0,557.0 625.0,557.2 622.0,557.4 619.0,557.6 616.0,557.8 613.0,558.0 610.0,558.2 607.0,558.4 604.0,558.6 601.0,558.8 598.0,559.0 595.0,559.3 592.0,559.5 589.0,559.7 586.0,559.9 583.0,560.2 580.0,560.4 577.0,560.7 574.0,560.9 571.0,561.2 568.0,561.4 565.0,561.7 562.0,561.9 559.0,562.2 556.0,562.5 553.0,562.7 550.0,563.0 547.0,563.3 544.0,563.6 541.0,563.9 538.0,564.2 535.0,564.4 532.0,564.7 529.0,565.0 526.0,565.3 523.0,565.6 520.0,566.0 517.0,566.3 514.0,566.6 511.0,566.9 508.0,567.2 505.0,567.6 502.0,567.9 499.0,568.2 496.0,568.5 493.0,568.9 490.0,569.2 487.0,569.6 484.0,569.9 481.0,570.3 478.0,570.6 475.0,571.0 472.0,571.3 469.0,571.7 466.0,572.1 463.0,572.4 460.0,572.8 457.0,573.2 454.0,573.6 451.0,573.9 448.0,574.3 445.0,574.7 442.0,575.1 439.0,575.5 436.0,575.9 433.0,576.3 430.0,576.7 427.0,577.1 424.0,577.5 421.0,577.9 418.0,578.3 415.0,578.7 412.0,579.1 409.0,579.5 406.0,579.9 403.0,580.4 400.0,580.8 397.0,581.2 394.0,581.7 391.0,582.1 388.0,582.5 385.0,583.0 382.0,583.4 379.0,583.8 376.0,584.3 373.0,584.7 370.0,585.2 367.0,585.6 364.0,586.1 361.0,586.5 358.0,587.0 355.0,587.5 352.0,587.9 349.0,588.4 346.0,588.9 343.0,589.3 340.0,589.8 337.0,590.3 334.0,590.7 331.0,591.2 328.0,591.7 325.0,592.2 322.0,592.7 319.0,593.2 316.0,593.6 313.0,594.1 310.0,594.6 307.0,595.1 304.0,595.6 301.0,596.1 298.0,596.6 295.0,597.1 292.0,597.6 289.0,598.1 286.0,598.6 283.0,599.1 280.0,599.7 277.0,600.2 274.0,600.7 271.0,601.2 268.0,601.7 265.0,602.2 262.0,602.8 259.0,603.3 256.0,603.8 253.0,604.3 250.0,604.9 247.0,605.4 244.0,605.9 241.0,606.5 238.0,607.0 235.0,607.5 232.0,608.1 229.0,608.6 226.0,609.1 223.0,609.7 220.0,610.2 217.0,610.8 214.0,611.3 211.0,611.9 208.0,612.4 205.0,613.0 202.0,613.5 199.0,614.1 196.0,614.6 193.0,615.2 190.0,615.7 187.0,616.3 184.0,616.8 181.0,617.4 178.0,618.0 175.0,618.5 172.0,619.1 169.0,619.6 166.0,620.2 163.0,620.8 160.0,621.3 157.0,621.9 154.0,622.5 151.0,623.0 148.0,623.6 145.0,624.2 142.0,624.7 139.0,625.3 136.0,625.9 133.0,626.5 130.0,627.0 127.0,627.6 124.0,628.2 121.0,628.8 118.0,629.3 115.0,629.9 112.0,630.5 109.0,631.1 106.0,631.6 103.0,632.2 100.0,632.8 97.0,633.4 94.0,634.0 91.0,634.5 88.0,635.1 85.0,635.7 82.0,636.3 79.0,636.9 76.0,637.4 73.0,638.0 70.0,638.6 67.0,639.2 64.0,639.8 61.0,640.3 58.0,640.9 55.0,641.5 52.0,642.1 49.0,642.7 46.0,643.2 43.0,643.8 Z" fill="#f2ce92"/>
  <path d="M45.0,642.4 48.0,641.6 51.0,640.9 54.0,640.2 57.0,639.5 60.0,638.7 63.0,638.0 66.0,637.2 69.0,636.5 72.0,635.7 75.0,635.0 78.0,634.2 81.0,633.5 84.0,632.7 87.0,632.0 90.0,631.2 93.0,630.5 96.0,629.7 99.0,628.9 102.0,628.2 105.0,627.4 108.0,626.7 111.0,625.9 114.0,625.2 117.0,624.5 120.0,623.7 123.0,623.0 126.0,622.3 129.0,621.5 132.0,620.8 135.0,620.1 138.0,619.4 141.0,618.6 144.0,617.9 147.0,617.2 150.0,616.5 153.0,615.8 156.0,615.1 159.0,614.4 162.0,613.7 165.0,613.1 168.0,612.4 171.0,611.7 174.0,611.0 177.0,610.4 180.0,609.7 183.0,609.1 186.0,608.4 189.0,607.8 192.0,607.1 195.0,606.5 198.0,605.9 201.0,605.3 204.0,604.6 207.0,604.0 210.0,603.4 213.0,602.8 216.0,602.2 219.0,601.6 222.0,601.1 225.0,600.5 228.0,599.9 231.0,599.3 234.0,598.8 237.0,598.2 240.0,597.7 243.0,597.1 246.0,596.6 249.0,596.1 252.0,595.5 255.0,595.0 258.0,594.5 261.0,594.0 264.0,593.5 267.0,593.0 270.0,592.5 273.0,592.0 276.0,591.5 279.0,591.0 282.0,590.5 285.0,590.0 288.0,589.6 291.0,589.1 294.0,588.6 297.0,588.2 300.0,587.7 303.0,587.3 306.0,586.8 309.0,586.4 312.0,586.0 315.0,585.5 318.0,585.1 321.0,584.7 324.0,584.3 327.0,583.8 330.0,583.4 333.0,583.0 336.0,582.6 339.0,582.2 342.0,581.8 345.0,581.4 348.0,581.0 351.0,580.7 354.0,580.3 357.0,579.9 360.0,579.5 363.0,579.1 366.0,578.8 369.0,578.4 372.0,578.0 375.0,577.7 378.0,577.3 381.0,577.0 384.0,576.6 387.0,576.3 390.0,575.9 393.0,575.6 396.0,575.2 399.0,574.9 402.0,574.5 405.0,574.2 408.0,573.9 411.0,573.5 414.0,573.2 417.0,572.9 420.0,572.5 423.0,572.2 426.0,571.9 429.0,571.6 432.0,571.2 435.0,570.9 438.0,570.6 441.0,570.3 444.0,570.0 447.0,569.7 450.0,569.4 453.0,569.1 456.0,568.8 459.0,568.5 462.0,568.2 465.0,567.9 468.0,567.6 471.0,567.3 474.0,567.0 477.0,566.7 480.0,566.4 483.0,566.1 486.0,565.8 489.0,565.5 492.0,565.2 495.0,564.9 498.0,564.6 501.0,564.4 504.0,564.1 507.0,563.8 510.0,563.5 513.0,563.2 516.0,563.0 519.0,562.7 522.0,562.4 525.0,562.2 528.0,561.9 531.0,561.6 534.0,561.4 537.0,561.1 540.0,560.8 543.0,560.6 546.0,560.3 549.0,560.1 552.0,559.8 555.0,559.5 558.0,559.3 561.0,559.0 564.0,558.8 567.0,558.5 570.0,558.3 573.0,558.1 576.0,557.8 579.0,557.6 582.0,557.3 585.0,557.1 588.0,556.9 591.0,556.6 594.0,556.4 597.0,556.2 600.0,556.0 603.0,555.7 606.0,555.5 609.0,555.3 612.0,555.1 615.0,554.9 618.0,554.7 621.0,554.5 624.0,554.3 627.0,554.1 630.0,553.9 633.0,553.7 636.0,553.5 639.0,553.3 642.0,553.1 645.0,552.9 648.0,552.7 651.0,552.6 654.0,552.4 657.0,552.2 660.0,552.0 663.0,551.9 666.0,551.7 669.0,551.6 672.0,551.4 675.0,551.2 678.0,551.1 681.0,550.9 684.0,550.8 687.0,550.7 690.0,550.5 693.0,550.4 696.0,550.3 699.0,550.1 702.0,550.0 705.0,549.9 708.0,549.8 711.0,549.7 714.0,549.6 717.0,549.5 720.0,549.4 723.0,549.3 726.0,549.2 729.0,549.1 732.0,549.0 735.0,548.9 738.0,548.8 741.0,548.7 744.0,548.7 747.0,548.6 750.0,548.5 753.0,548.5 756.0,548.4 759.0,548.4 762.0,548.3 765.0,548.2 768.0,548.2 771.0,548.2 774.0,548.1 777.0,548.1 780.0,548.0 783.0,548.0 786.0,548.0 789.0,547.9 792.0,547.9 795.0,547.9 798.0,547.9 801.0,547.8 804.0,547.8 807.0,547.8 810.0,547.8 813.0,547.8 816.0,547.7 819.0,547.7 822.0,547.7 823.0,547.7" fill="none" stroke="#ff9d1a" stroke-width="0.85"/>
  <path d="M43.0,643.8 46.0,643.2 49.0,642.7 52.0,642.1 55.0,641.5 58.0,640.9 61.0,640.3 64.0,639.8 67.0,639.2 70.0,638.6 73.0,638.0 76.0,637.4 79.0,636.9 82.0,636.3 85.0,635.7 88.0,635.1 91.0,634.5 94.0,634.0 97.0,633.4 100.0,632.8 103.0,632.2 106.0,631.6 109.0,631.1 112.0,630.5 115.0,629.9 118.0,629.3 121.0,628.8 124.0,628.2 127.0,627.6 130.0,627.0 133.0,626.5 136.0,625.9 139.0,625.3 142.0,624.7 145.0,624.2 148.0,623.6 151.0,623.0 154.0,622.5 157.0,621.9 160.0,621.3 163.0,620.8 166.0,620.2 169.0,619.6 172.0,619.1 175.0,618.5 178.0,618.0 181.0,617.4 184.0,616.8 187.0,616.3 190.0,615.7 193.0,615.2 196.0,614.6 199.0,614.1 202.0,613.5 205.0,613.0 208.0,612.4 211.0,611.9 214.0,611.3 217.0,610.8 220.0,610.2 223.0,609.7 226.0,609.1 229.0,608.6 232.0,608.1 235.0,607.5 238.0,607.0 241.0,606.5 244.0,605.9 247.0,605.4 250.0,604.9 253.0,604.3 256.0,603.8 259.0,603.3 262.0,602.8 265.0,602.2 268.0,601.7 271.0,601.2 274.0,600.7 277.0,600.2 280.0,599.7 283.0,599.1 286.0,598.6 289.0,598.1 292.0,597.6 295.0,597.1 298.0,596.6 301.0,596.1 304.0,595.6 307.0,595.1 310.0,594.6 313.0,594.1 316.0,593.6 319.0,593.2 322.0,592.7 325.0,592.2 328.0,591.7 331.0,591.2 334.0,590.7 337.0,590.3 340.0,589.8 343.0,589.3 346.0,588.9 349.0,588.4 352.0,587.9 355.0,587.5 358.0,587.0 361.0,586.5 364.0,586.1 367.0,585.6 370.0,585.2 373.0,584.7 376.0,584.3 379.0,583.8 382.0,583.4 385.0,583.0 388.0,582.5 391.0,582.1 394.0,581.7 397.0,581.2 400.0,580.8 403.0,580.4 406.0,579.9 409.0,579.5 412.0,579.1 415.0,578.7 418.0,578.3 421.0,577.9 424.0,577.5 427.0,577.1 430.0,576.7 433.0,576.3 436.0,575.9 439.0,575.5 442.0,575.1 445.0,574.7 448.0,574.3 451.0,573.9 454.0,573.6 457.0,573.2 460.0,572.8 463.0,572.4 466.0,572.1 469.0,571.7 472.0,571.3 475.0,571.0 478.0,570.6 481.0,570.3 484.0,569.9 487.0,569.6 490.0,569.2 493.0,568.9 496.0,568.5 499.0,568.2 502.0,567.9 505.0,567.6 508.0,567.2 511.0,566.9 514.0,566.6 517.0,566.3 520.0,566.0 523.0,565.6 526.0,565.3 529.0,565.0 532.0,564.7 535.0,564.4 538.0,564.2 541.0,563.9 544.0,563.6 547.0,563.3 550.0,563.0 553.0,562.7 556.0,562.5 559.0,562.2 562.0,561.9 565.0,561.7 568.0,561.4 571.0,561.2 574.0,560.9 577.0,560.7 580.0,560.4 583.0,560.2 586.0,559.9 589.0,559.7 592.0,559.5 595.0,559.3 598.0,559.0 601.0,558.8 604.0,558.6 607.0,558.4 610.0,558.2 613.0,558.0 616.0,557.8 619.0,557.6 622.0,557.4 625.0,557.2 628.0,557.0 631.0,556.8 634.0,556.7 637.0,556.5 640.0,556.3 643.0,556.2 646.0,556.0 649.0,555.9 652.0,555.7 655.0,555.6 658.0,555.4 661.0,555.3 664.0,555.2 667.0,555.0 670.0,554.9 673.0,554.8 676.0,554.7 679.0,554.5 682.0,554.4 685.0,554.3 688.0,554.2 691.0,554.1 694.0,554.1 697.0,554.0 700.0,553.9 703.0,553.8 706.0,553.7 709.0,553.7 712.0,553.6 715.0,553.6 718.0,553.5 721.0,553.5 724.0,553.4 727.0,553.4 730.0,553.3 733.0,553.3 736.0,553.3 739.0,553.3 742.0,553.3 745.0,553.3 748.0,553.3 751.0,553.3 754.0,553.3 757.0,553.3 760.0,553.3 763.0,553.3 766.0,553.3 769.0,553.4 772.0,553.4 775.0,553.5 778.0,553.5 781.0,553.6 784.0,553.6 787.0,553.7 790.0,553.7 793.0,553.8 796.0,553.9 799.0,554.0 802.0,554.1 805.0,554.2 808.0,554.3 811.0,554.4 814.0,554.5 817.0,554.6 820.0,554.8 823.0,554.9" fill="none" stroke="#ff9d1a" stroke-width="0.85"/>
  <path d="M177.4,470.1 180.2,464.4 183.0,458.8 185.7,453.0 188.5,447.3 191.2,441.5 193.9,435.7 196.6,429.9 199.3,424.0 202.0,418.2 204.7,412.3 207.4,406.4 210.1,400.5 212.9,394.7 215.7,388.8 218.5,382.9 221.3,377.1 224.2,371.2 227.1,365.4 230.1,359.6 233.2,353.9 236.3,348.1 239.4,342.4 242.6,336.7 245.9,331.1 249.3,325.5 252.8,320.0 256.3,314.5 260.0,309.1 263.7,303.8 267.6,298.5 271.5,293.2 275.6,288.1 279.8,283.0 284.1,278.0 288.5,273.1 293.1,268.3 297.7,263.5 302.5,258.9 307.4,254.5 312.4,250.1 317.5,245.9 322.7,241.9 328.0,238.0 333.3,234.3 338.8,230.8 344.3,227.5 350.0,224.4 355.6,221.5 361.4,218.8 367.2,216.4 373.1,214.3 379.1,212.3 385.1,210.7 391.1,209.3 397.2,208.3 403.3,207.5 409.5,207.0 415.7,206.9 422.0,207.1 428.2,207.6 434.5,208.4 440.7,209.5 447.0,210.8 453.2,212.4 459.3,214.3 465.5,216.5 471.6,218.9 477.6,221.5 483.5,224.3 489.4,227.3 495.2,230.5 500.9,233.9 506.5,237.5 512.0,241.3 517.4,245.1 522.8,249.2 528.0,253.3 533.2,257.6 538.2,261.9 543.2,266.4 548.1,270.9 552.9,275.5 557.6,280.2 562.1,284.9 566.6,289.7 571.1,294.5 575.4,299.3 579.7,304.3 583.8,309.2 588.0,314.2 592.0,319.3 596.0,324.4 599.9,329.5 603.7,334.7 607.6,339.9 611.3,345.2 615.0,350.4 618.7,355.8 622.3,361.1 625.9,366.4 629.4,371.8 633.0,377.2 636.5,382.7 639.9,388.1 643.4,393.6 646.8,399.0 650.2,404.5 653.7,410.0 657.1,415.5 660.5,421.0 663.9,426.5 667.3,432.0 670.7,437.6 674.1,443.1 677.6,448.6 681.0,454.1 684.5,459.6 688.0,465.1 691.6,470.5" fill="none" stroke="#4fa8a7" stroke-width="1"/>
  <!-- triad -->
  <line x1="757" y1="425" x2="757" y2="399" stroke="#7ed957" stroke-width="1.5"/>
  <rect x="755.5" y="397" width="3" height="3" fill="#4ee04e"/>
  <line x1="757" y1="425" x2="783" y2="425" stroke="#ff6a4a" stroke-width="1.2"/>
  <circle cx="783" cy="425" r="1.6" fill="#ff3a2a"/>
  <circle cx="757" cy="425" r="2.6" fill="#3ee8f0"/>
  <!-- green bar -->
  <rect x="40" y="530" width="5" height="108" fill="#00b300"/>
  <!-- top marker -->
  <circle cx="42.5" cy="525.2" r="10.5" fill="#ffca00"/>
  <line x1="35" y1="525.5" x2="50" y2="525.5" stroke="#1e1e2a" stroke-width="1"/>
  <path d="M42.5,522.8 L45.2,525.5 L42.5,528.2 L39.8,525.5 Z" fill="#c8ecfb" stroke="#1d4a70" stroke-width="1"/>
  <!-- bottom marker -->
  <circle cx="43" cy="644" r="6.8" fill="#ffca00" stroke="#ffd21a" stroke-width="1.2"/>
  <circle cx="43" cy="644" r="5.6" fill="none" stroke="#3a3a3a" stroke-width="1"/>
  <!-- leaders -->
  <path d="M85,485.5 H58.5 L47.5,516" fill="none" stroke="#3d2e63" stroke-width="1"/>
  <path d="M45.8,524.5 L46.4,513.8 L50.9,515.3 Z" fill="#2e1f50"/>
  <path d="M85,595.5 H59 L47.5,628" fill="none" stroke="#3d2e63" stroke-width="1"/>
  <path d="M45.6,637 L46.2,626.5 L50.6,628 Z" fill="#2e1f50"/>
  <rect x="85" y="477" width="23" height="17" fill="#fbfbfd" fill-opacity="0.72"/>
  <line x1="100.5" y1="481.5" x2="100.5" y2="490" stroke="#5c5c6a" stroke-width="1"/>
  <rect x="85" y="587" width="37" height="18" fill="#fbf3ea"/>
  <text transform="translate(90.5 600) scale(0.8 1)" x="0.3 11.3 17.8 27" y="0" font-family="Liberation Sans" font-size="12" fill="#45405c">0.00</text>
</svg>

<div id="border" class="abs"></div>
</body></html>
